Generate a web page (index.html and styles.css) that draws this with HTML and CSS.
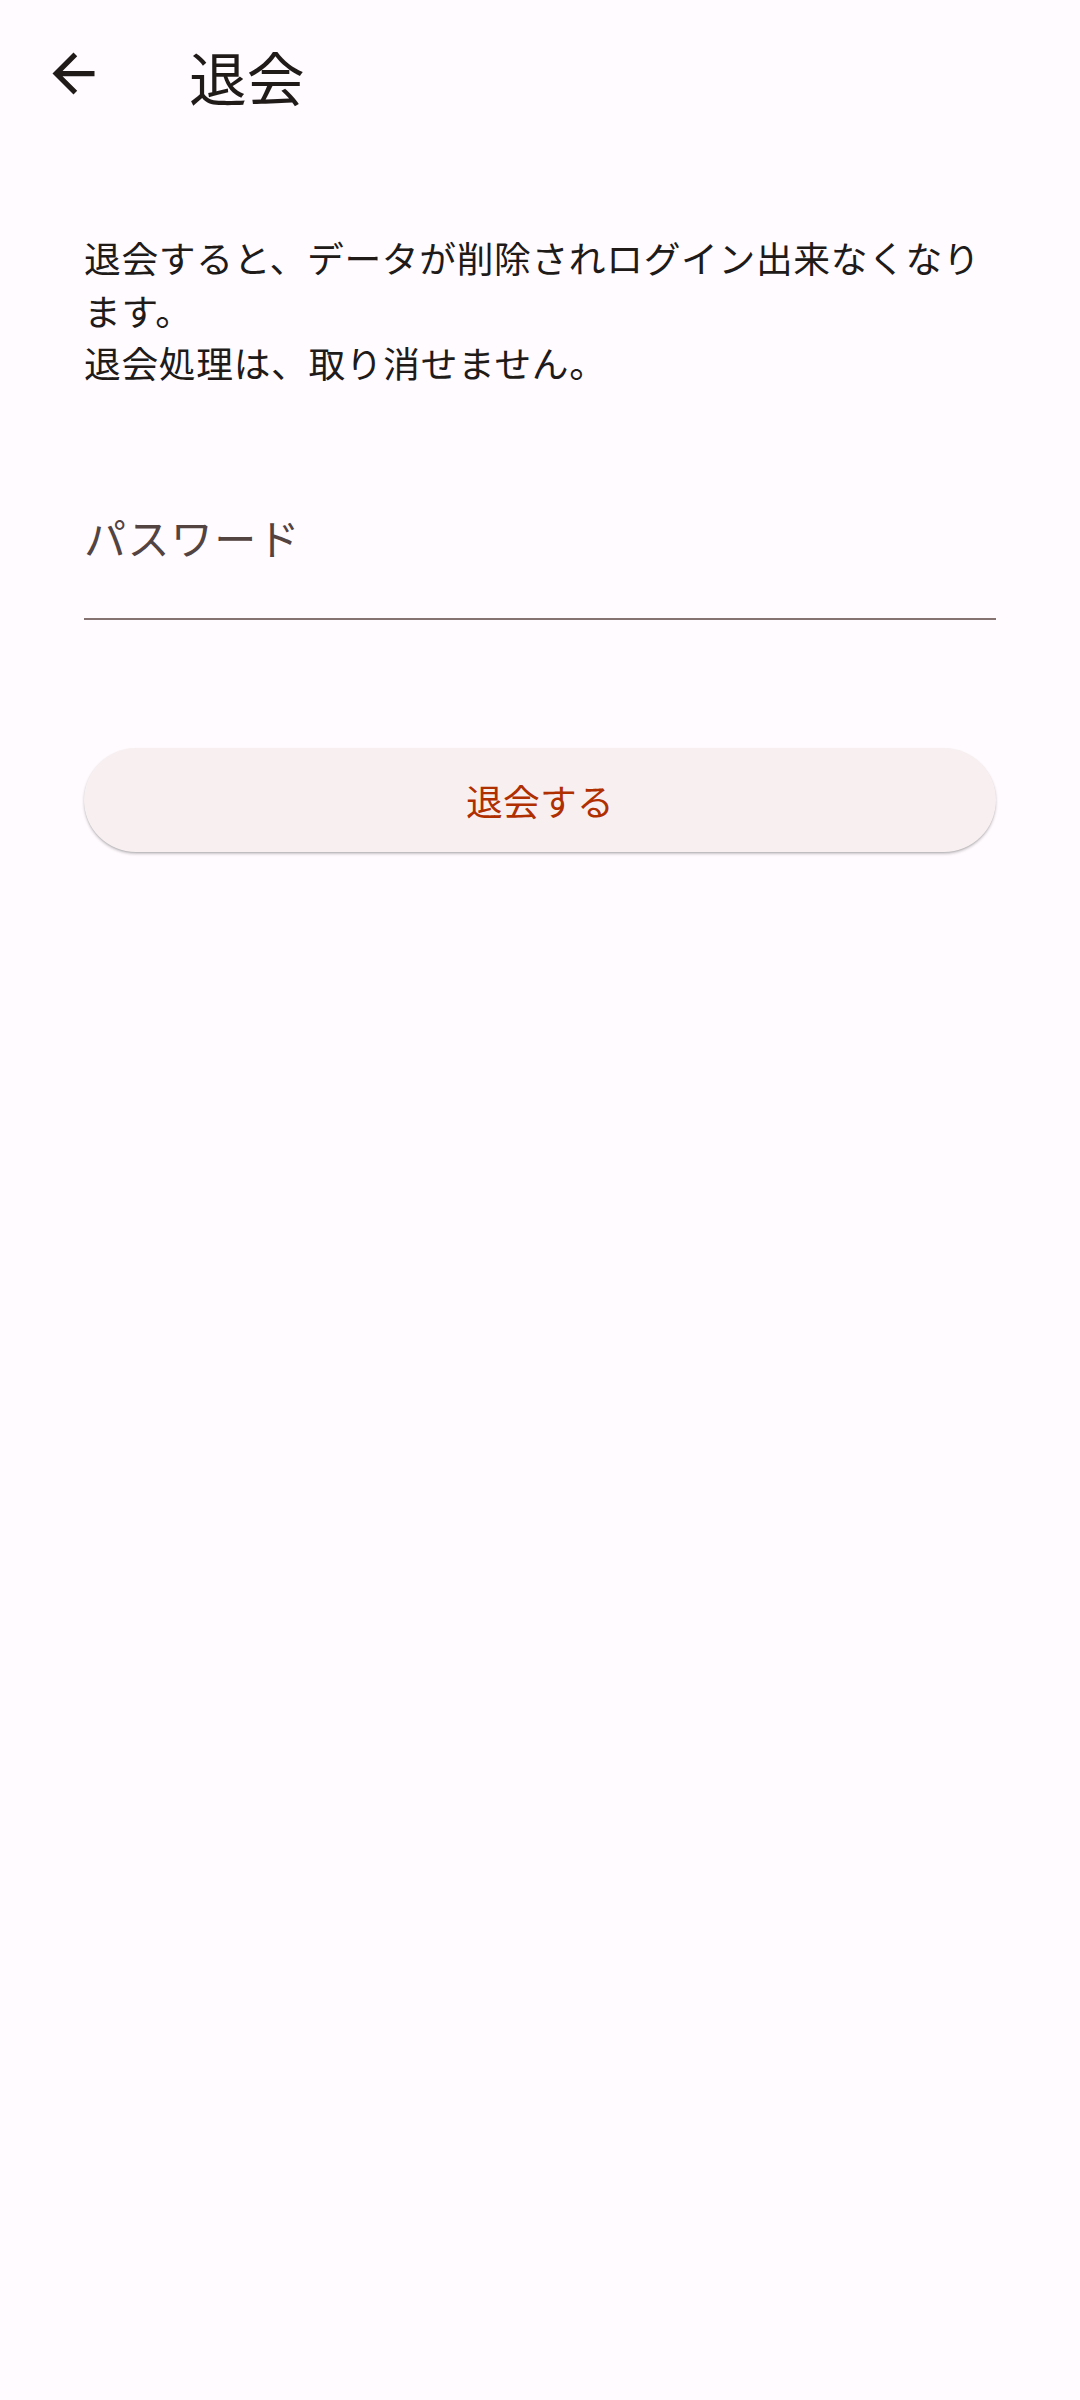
FILE: index.html
```html
<!DOCTYPE html>
<html lang="ja">
<head>
<meta charset="utf-8">
<title>退会</title>
<link rel="stylesheet" href="styles.css">
</head>
<body>
<div class="screen">
  <header class="app-bar">
    <button class="icon-button" aria-label="戻る">
      <svg class="icon" viewBox="0 0 24 24" width="63" height="63">
        <path d="M20 11H7.83l5.59-5.59L12 4l-8 8 8 8 1.41-1.41L7.83 13H20v-2z" fill="#201a19"/>
      </svg>
    </button>
    <h1 class="title">退会</h1>
  </header>
  <main class="content">
    <p class="notice">退会すると、データが削除されログイン出来なくなります。<br>退会処理は、取り消せません。</p>
    <label class="text-field">
      <span class="field-label">パスワード</span>
    </label>
    <button class="withdraw-button">退会する</button>
  </main>
</div>
</body>
</html>
```
FILE: styles.css
```css
html, body {
  margin: 0;
  padding: 0;
  background: #fffbff;
}

body {
  width: 1080px;
  height: 2400px;
  font-family: "Noto Sans CJK JP", "Noto Sans", Roboto, sans-serif;
  color: #201a19;
}

.screen {
  display: flex;
  flex-direction: column;
}

.app-bar {
  height: 147px;
  padding: 0 10.5px;
  display: flex;
  align-items: center;
  box-sizing: border-box;
}

.icon-button {
  width: 126px;
  height: 126px;
  border: none;
  background: transparent;
  padding: 0;
  display: flex;
  align-items: center;
  justify-content: center;
}

.icon {
  display: block;
}

.title {
  margin: 0 0 0 52.5px;
  font-size: 57.75px;
  font-weight: 400;
  line-height: 73.5px;
  position: relative;
  top: 3px;
}

.content {
  display: flex;
  flex-direction: column;
  padding: 84px 84px 0;
}

.notice {
  margin: 0;
  font-size: 36.75px;
  line-height: 52.5px;
  letter-spacing: 0.66px;
  color: #201a19;
}

.text-field {
  margin-top: 84px;
  height: 147px;
  box-sizing: border-box;
  padding-top: 32px;
  border-bottom: 2.7px solid #857371;
  display: block;
}

.field-label {
  display: block;
  font-size: 42px;
  line-height: 63px;
  letter-spacing: 1.4px;
  color: #534341;
}

.withdraw-button {
  margin-top: 128px;
  height: 104px;
  border: none;
  border-radius: 52.5px;
  background: #f8f0f0;
  color: #b02f00;
  font-family: "Noto Sans CJK JP", "Noto Sans", Roboto, sans-serif;
  font-size: 36.75px;
  font-weight: 400;
  letter-spacing: 0.26px;
  box-shadow: 0 2px 3px rgba(0, 0, 0, 0.22), 0 1px 1px rgba(0, 0, 0, 0.08);
  padding: 0;
}
```
